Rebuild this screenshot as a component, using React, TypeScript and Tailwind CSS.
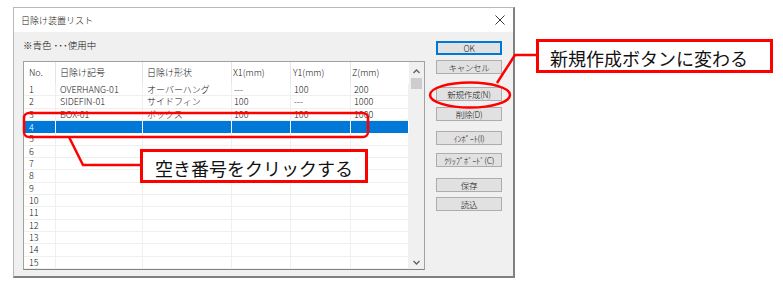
const rows = [
  { no: '1', code: 'OVERHANG-01', shape: 'オーバーハング', x1: '---', y1: '100', z: '200' },
  { no: '2', code: 'SIDEFIN-01', shape: 'サイドフィン', x1: '100', y1: '---', z: '1000' },
  { no: '3', code: 'BOX-01', shape: 'ボックス', x1: '100', y1: '100', z: '1000' },
  ...Array.from({ length: 12 }, (_, i) => ({ no: String(i + 4), code: '', shape: '', x1: '', y1: '', z: '' }))
]

const SELECTED = '4'

function Btn({ label, primary = false, className = '' }: { label: string; primary?: boolean; className?: string }) {
  return (
    <div
      className={`h-[14px] w-[66px] flex items-center justify-center whitespace-nowrap bg-[#e1e1e1] text-[8.5px] tracking-[-0.3px] leading-none text-[#111] ${
        primary ? 'border-2 border-[#0078d7]' : 'border border-[#adadad]'
      } ${className}`}
    >
      {label}
    </div>
  )
}

export default function App() {
  return (
    <div className="relative w-[783px] h-[285px] bg-white overflow-hidden font-['Noto_Sans_CJK_JP',sans-serif] text-black">
      {/* Dialog */}
      <div className="ml-[13px] mt-[7px] w-[502px] h-[271px] flex flex-col bg-[#f0f0f0] border-l border-t border-[#b9b9b9] border-r-2 border-b-2 border-r-[#808080] border-b-[#808080] font-light">
        {/* Title bar */}
        <div className="h-[24px] bg-white flex items-center justify-between pl-[7px] pr-[8px]">
          <span className="text-[9px] leading-none text-[#111]">日除け装置リスト</span>
          <svg width="10" height="10" viewBox="0 0 10 10">
            <path d="M0.5 0.5 L9.5 9.5 M9.5 0.5 L0.5 9.5" stroke="#222" strokeWidth="0.9" />
          </svg>
        </div>

        {/* Body */}
        <div className="flex flex-1 pl-[9px]">
          <div className="flex flex-col">
            <div className="h-[29px] pt-[7px] text-[9.5px] leading-[12px] text-[#111]">※青色 ･･･使用中</div>

            {/* List */}
            <div className="w-[402px] h-[209px] flex bg-white border border-[#a0a0a0] border-b-[#828282]">
              <div className="flex flex-col w-[385px] text-[9px] text-[#111]">
                <div className="h-[22px] flex">
                  <div className="w-[32px] pl-[5px] flex items-center border-r border-[#e5e5e5]">No.</div>
                  <div className="w-[87px] pl-[4px] flex items-center border-r border-[#e5e5e5]">日除け記号</div>
                  <div className="w-[89px] pl-[4px] flex items-center border-r border-[#e5e5e5]">日除け形状</div>
                  <div className="w-[59px] pl-[1px] flex items-center border-r border-[#e5e5e5]">X1(mm)</div>
                  <div className="w-[60px] pl-[2px] flex items-center border-r border-[#e5e5e5]">Y1(mm)</div>
                  <div className="w-[58px] pl-[1px] flex items-center">Z(mm)</div>
                </div>
                {rows.map((r) => {
                  const sel = r.no === SELECTED
                  const cell = sel ? 'border-r border-white' : 'border-r border-[#efefef]'
                  return (
                    <div
                      key={r.no}
                      className={`h-[12.33px] flex leading-none ${
                        sel ? 'bg-[#0078d7] text-white' : 'border-b border-[#efefef]'
                      }`}
                    >
                      <div className={`w-[32px] pl-[5px] flex items-center ${cell}`}>{r.no}</div>
                      <div className={`w-[87px] pl-[4px] flex items-center ${cell}`}>{r.code}</div>
                      <div className={`w-[89px] pl-[4px] flex items-center ${cell}`}>{r.shape}</div>
                      <div className={`w-[59px] pl-[2px] flex items-center ${cell}`}>{r.x1}</div>
                      <div className={`w-[60px] pl-[3px] flex items-center ${cell}`}>{r.y1}</div>
                      <div className={`w-[58px] pl-[3px] flex items-center ${cell}`}>{r.z}</div>
                    </div>
                  )
                })}
              </div>

              {/* Scrollbar */}
              <div className="w-[15px] bg-[#f0f0f0] flex flex-col items-center">
                <svg className="mt-[7px]" width="7" height="5" viewBox="0 0 7 5">
                  <path d="M0.5 4 L3.5 1 L6.5 4" stroke="#606060" strokeWidth="1.3" fill="none" />
                </svg>
                <div className="mt-[4px] w-[11px] h-[11px] bg-[#cdcdcd]" />
                <div className="flex-1" />
                <svg className="mb-[4px]" width="7" height="5" viewBox="0 0 7 5">
                  <path d="M0.5 1 L3.5 4 L6.5 1" stroke="#606060" strokeWidth="1.3" fill="none" />
                </svg>
              </div>
            </div>
          </div>

          {/* Buttons */}
          <div className="ml-[11px] pt-[9px] flex flex-col">
            <Btn label="OK" primary />
            <Btn label="キャンセル" className="mt-[5px]" />
            <Btn label="新規作成(N)" className="mt-[13px]" />
            <Btn label="削除(D)" className="mt-[6px]" />
            <Btn label="ｲﾝﾎﾟｰﾄ(I)" className="mt-[10px]" />
            <Btn label="ｸﾘｯﾌﾟﾎﾞｰﾄﾞ(C)" className="mt-[8px]" />
            <Btn label="保存" className="mt-[11px]" />
            <Btn label="読込" className="mt-[5px]" />
          </div>
        </div>
      </div>

      {/* Annotations */}
      <svg className="absolute inset-0 pointer-events-none" width="783" height="285" viewBox="0 0 783 285">
        <ellipse cx="470" cy="95" rx="40" ry="12.5" fill="none" stroke="#ff0000" strokeWidth="2.5" />
        <path d="M537 55 L515 55 L497 83" fill="none" stroke="#ff0000" strokeWidth="2.5" />
        <rect x="24" y="113" width="344" height="24" rx="5" fill="none" stroke="#ff0000" strokeWidth="2.5" />
        <path d="M69 137 L83 165 L141 165" fill="none" stroke="#ff0000" strokeWidth="2.5" />
      </svg>

      <div className="absolute left-[536px] top-[39px] w-[237px] h-[34px] bg-white border-[3px] border-[#ff0000] flex items-center pl-[11px] pt-[3px] text-[18px] leading-none text-[#111]">
        新規作成ボタンに変わる
      </div>
      <div className="absolute left-[140px] top-[149px] w-[228px] h-[34px] bg-white border-[3px] border-[#ff0000] flex items-center pl-[12px] pt-[3px] text-[18px] leading-none text-[#111]">
        空き番号をクリックする
      </div>
    </div>
  )
}
